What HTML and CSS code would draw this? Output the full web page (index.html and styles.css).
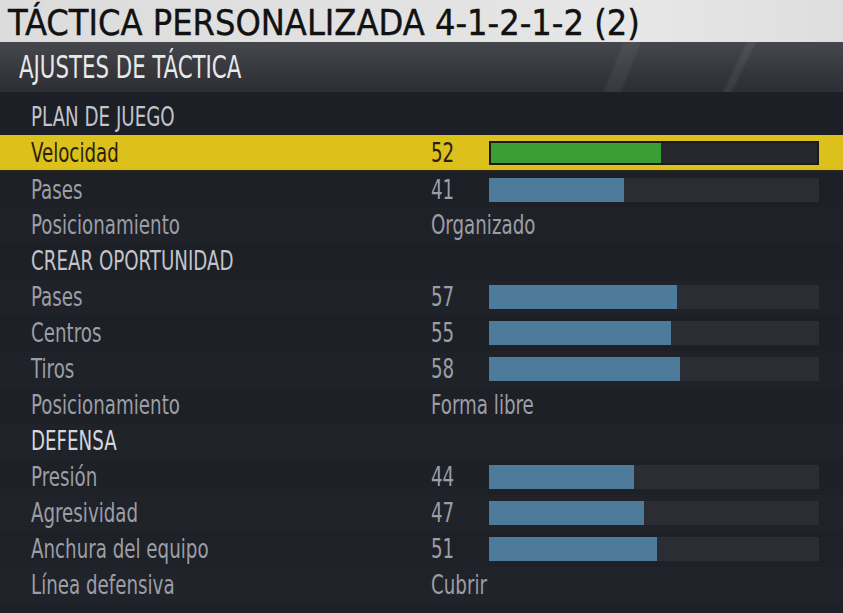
FILE: index.html
```html
<!DOCTYPE html>
<html lang="es">
<head>
<meta charset="utf-8">
<title>Táctica personalizada</title>
<link rel="stylesheet" href="styles.css">
</head>
<body>
<div class="screen">
  <header class="title-band">
    <h1 class="title">TÁCTICA PERSONALIZADA 4-1-2-1-2 (2)</h1>
  </header>
  <div class="sub-band">
    <h2 class="subtitle">AJUSTES DE TÁCTICA</h2>
  </div>
  <div class="list">
    <div class="row section"><span class="label">PLAN DE JUEGO</span></div>
    <div class="row selected"><span class="label">Velocidad</span><span class="num">52</span><div class="track"><div class="fill" style="width:52%"></div></div></div>
    <div class="row"><span class="label">Pases</span><span class="num">41</span><div class="track"><div class="fill" style="width:41%"></div></div></div>
    <div class="row"><span class="label">Posicionamiento</span><span class="val">Organizado</span></div>
    <div class="row section"><span class="label">CREAR OPORTUNIDAD</span></div>
    <div class="row"><span class="label">Pases</span><span class="num">57</span><div class="track"><div class="fill" style="width:57%"></div></div></div>
    <div class="row"><span class="label">Centros</span><span class="num">55</span><div class="track"><div class="fill" style="width:55%"></div></div></div>
    <div class="row"><span class="label">Tiros</span><span class="num">58</span><div class="track"><div class="fill" style="width:58%"></div></div></div>
    <div class="row"><span class="label">Posicionamiento</span><span class="val">Forma libre</span></div>
    <div class="row section bright"><span class="label">DEFENSA</span></div>
    <div class="row"><span class="label">Presión</span><span class="num">44</span><div class="track"><div class="fill" style="width:44%"></div></div></div>
    <div class="row"><span class="label">Agresividad</span><span class="num">47</span><div class="track"><div class="fill" style="width:47%"></div></div></div>
    <div class="row"><span class="label">Anchura del equipo</span><span class="num">51</span><div class="track"><div class="fill" style="width:51%"></div></div></div>
    <div class="row"><span class="label">Línea defensiva</span><span class="val">Cubrir</span></div>
  </div>
</div>
</body>
</html>
```
FILE: styles.css
```css
* { box-sizing: border-box; }
html, body { margin: 0; padding: 0; }
body {
  width: 843px;
  height: 613px;
  overflow: hidden;
  background: #1d1f26;
  font-family: "DejaVu Sans Condensed", "DejaVu Sans", sans-serif;
}
.screen {
  display: flex;
  flex-direction: column;
  height: 613px;
}
.title-band {
  height: 42px;
  background: linear-gradient(90deg, #dcdcdc 0%, #e2e2e2 50%, #e7e7e8 75%, #dedede 100%);
  display: flex;
  align-items: flex-end;
  padding-left: 8px;
}
.title {
  margin: 0;
  font-weight: normal;
  font-size: 36px;
  line-height: 42px;
  color: #111;
  white-space: nowrap;
  display: inline-block;
  transform: scaleX(0.995);
  transform-origin: left center;
  position: relative;
  top: 2px;
  -webkit-text-stroke: 0.4px #111;
}
.sub-band {
  height: 50px;
  background:
    linear-gradient(112deg, transparent 0 72%, rgba(255,255,255,0.05) 72.5% 74%, transparent 74.5% 100%),
    linear-gradient(116deg, transparent 0 86%, rgba(255,255,255,0.06) 86.3% 87%, transparent 87.3% 100%),
    linear-gradient(180deg, #45474d 0%, #35373c 60%, #2c2e33 100%);
  display: flex;
  align-items: center;
  padding-left: 19px;
}
.subtitle {
  margin: 0;
  font-weight: normal;
  font-size: 32px;
  color: #e9e9ea;
  white-space: nowrap;
  display: inline-block;
  transform: scaleX(0.74);
  transform-origin: left center;
}
.list {
  flex: 1;
  padding-top: 7px;
  background: linear-gradient(180deg, #1d1f27 0%, #1f2128 100%);
}
.row {
  height: 36px;
  display: grid;
  grid-template-columns: 400px 58px 330px;
  align-items: center;
  padding-left: 31px;
  font-size: 26px;
  color: #9c9ea5;
  white-space: nowrap;
}
.row:nth-child(even) { background: rgba(255,255,255,0.012); }
.row.section { color: #c2c4ca; }
.row.section.bright { color: #d6d7db; }
.row .label, .row .num, .row .val {
  line-height: 36px;
  display: inline-block;
  justify-self: start;
  transform: scaleX(0.78);
  transform-origin: left center;
}
.row .val { grid-column: 2 / 4; }
.track {
  height: 24px;
  background: #2a2d34;
}
.fill {
  height: 100%;
  background: #4e7b99;
}
.row.selected {
  background: #dcc11c;
  color: #2a1f0c;
  border-bottom: 2px solid #2a2410;
  height: 37px;
}
.row.selected + .row { height: 35px; }
.row.selected .track {
  background: #26282d;
  border: 2px solid #1a1a16;
}
.row.selected .fill { background: #3a9d36; }
```
